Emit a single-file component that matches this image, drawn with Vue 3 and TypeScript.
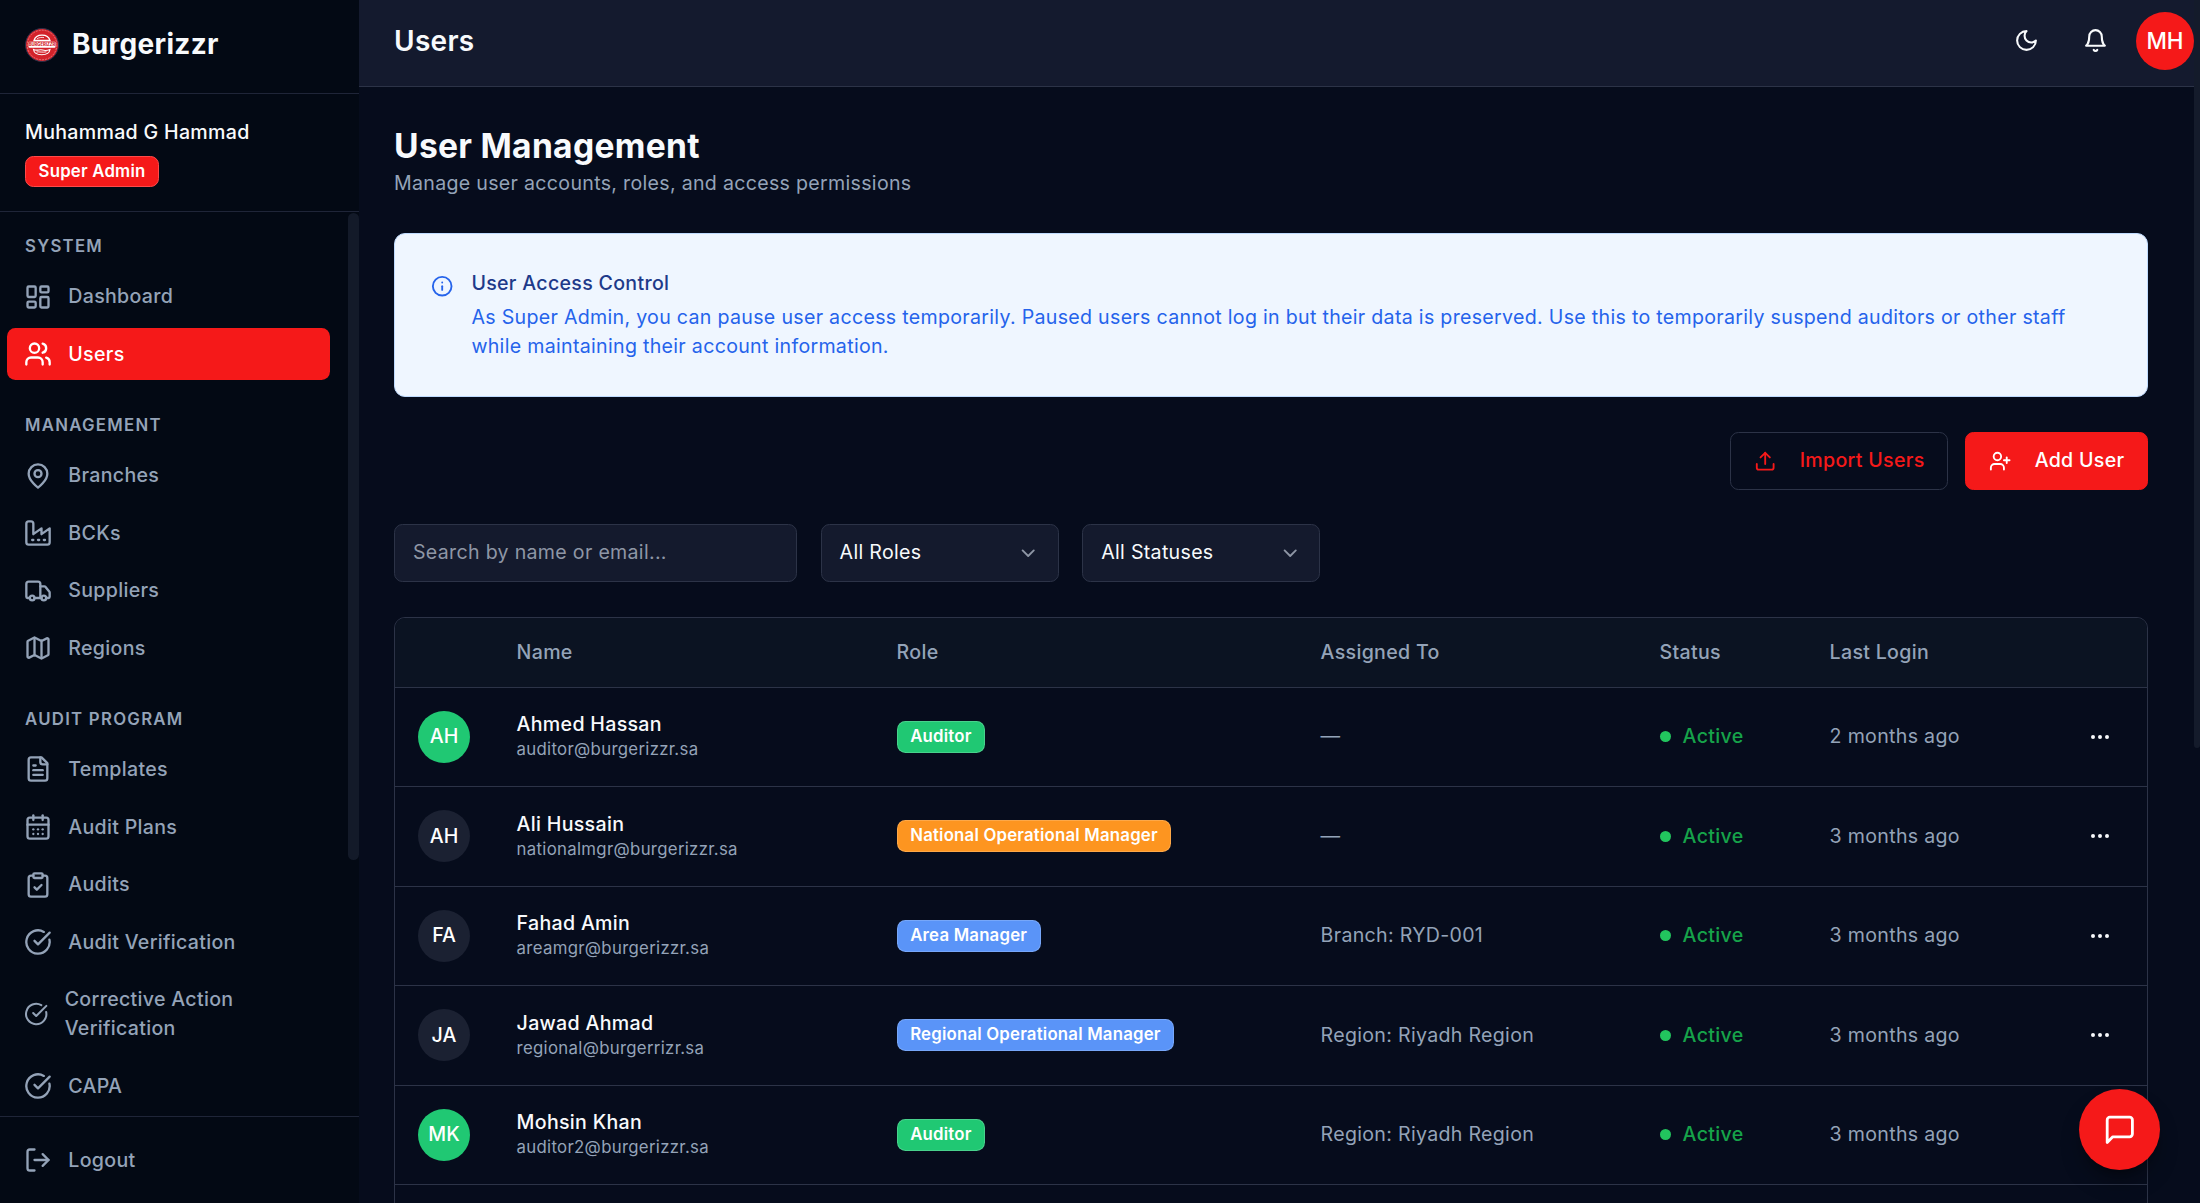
<template>
  <div class="app">
    <aside class="sidebar">
      <div class="brand">
        <svg class="logo" viewBox="0 0 34 34" aria-hidden="true">
          <circle cx="17" cy="17" r="16.500" fill="#d3222a" stroke="#2a2f48" />
          <circle cx="17" cy="17" r="14.800" fill="none" stroke="#f3b8b8" stroke-width="0.5" stroke-dasharray="2 1" />
          <path d="M9 12.500C10 9 13 7.200 17 7.200s7 1.800 8 5.300z" fill="#d3222a" stroke="#fff" stroke-width="1.300" />
          <path d="M12 10.800c2-1.300 4.500-1.600 7-1.200" fill="none" stroke="#fff" stroke-width="0.8" />
          <rect x="3.500" y="13.800" width="27" height="6" rx="1" fill="#fff" />
          <text x="17" y="18.400" text-anchor="middle" class="logo-text">BURGERIZZR</text>
          <path d="M8.500 21.500c3.500 1.800 6-.5 9 .5s5 .5 7.500-.5c-.5 3.500-3.500 5.200-8.300 5.200s-7.700-1.700-8.200-5.200z" fill="#d3222a" stroke="#fff" stroke-width="1.100" />
          <path d="M11.500 24c3-.5 6 .7 10-.2" fill="none" stroke="#fff" stroke-width="0.9" />
        </svg>
        <span class="brand-name">Burgerizzr</span>
      </div>

      <div class="profile">
        <div class="profile-name">Muhammad G Hammad</div>
        <span class="profile-role">Super Admin</span>
      </div>

      <div class="nav">
        <nav class="nav-list">
          <section v-for="group in navGroups" :key="group.title" class="nav-group">
            <h3 class="nav-title">{{ group.title }}</h3>
            <a
              v-for="item in group.items"
              :key="item.label"
              class="nav-item"
              :class="{ active: item.active }"
            >
              <svg class="icon nav-icon" viewBox="0 0 24 24" v-html="icons[item.icon]"></svg>
              <span>{{ item.label }}</span>
            </a>
          </section>
        </nav>
        <div class="nav-scrollbar"><div class="nav-thumb"></div></div>
      </div>

      <div class="logout">
        <a class="nav-item">
          <svg class="icon nav-icon" viewBox="0 0 24 24" v-html="icons.logout"></svg>
          <span>Logout</span>
        </a>
      </div>
    </aside>

    <div class="main">
      <header class="topbar">
        <h1 class="topbar-title">Users</h1>
        <div class="topbar-actions">
          <button class="topbar-btn" aria-label="Theme">
            <svg class="icon" viewBox="0 0 24 24" v-html="icons.moon"></svg>
          </button>
          <button class="topbar-btn" aria-label="Notifications">
            <svg class="icon" viewBox="0 0 24 24" v-html="icons.bell"></svg>
          </button>
          <div class="topbar-avatar">MH</div>
        </div>
      </header>

      <main class="content">
        <h2 class="page-title">User Management</h2>
        <p class="page-subtitle">Manage user accounts, roles, and access permissions</p>

        <div class="alert">
          <svg class="icon alert-icon" viewBox="0 0 24 24" v-html="icons.info"></svg>
          <div>
            <div class="alert-title">User Access Control</div>
            <p class="alert-text">
              As Super Admin, you can pause user access temporarily. Paused users cannot log in but
              their data is preserved. Use this to temporarily suspend auditors or other staff while
              maintaining their account information.
            </p>
          </div>
        </div>

        <div class="actions">
          <button class="btn btn-outline">
            <svg class="icon btn-icon" viewBox="0 0 24 24" v-html="icons.upload"></svg>
            Import Users
          </button>
          <button class="btn btn-primary">
            <svg class="icon btn-icon" viewBox="0 0 24 24" v-html="icons.userPlus"></svg>
            Add User
          </button>
        </div>

        <div class="filters">
          <div class="field search">Search by name or email...</div>
          <div class="field select">
            All Roles
            <svg class="icon chevron" viewBox="0 0 24 24" v-html="icons.chevron"></svg>
          </div>
          <div class="field select">
            All Statuses
            <svg class="icon chevron" viewBox="0 0 24 24" v-html="icons.chevron"></svg>
          </div>
        </div>

        <div class="table">
          <div class="row head">
            <div></div>
            <div>Name</div>
            <div>Role</div>
            <div>Assigned To</div>
            <div>Status</div>
            <div>Last Login</div>
            <div></div>
          </div>
          <div v-for="user in users" :key="user.email" class="row">
            <div class="avatar" :class="{ green: user.role === 'Auditor' }">{{ user.initials }}</div>
            <div>
              <div class="user-name">{{ user.name }}</div>
              <div class="user-email">{{ user.email }}</div>
            </div>
            <div><span class="badge" :class="user.tone">{{ user.role }}</span></div>
            <div class="muted">{{ user.assigned }}</div>
            <div class="status"><i class="dot"></i>Active</div>
            <div class="muted">{{ user.login }}</div>
            <div class="more">
              <svg class="icon" viewBox="0 0 24 24" v-html="icons.more"></svg>
            </div>
          </div>
        </div>
      </main>
    </div>

    <div class="page-scrollbar"><div class="page-thumb"></div></div>

    <button class="fab" aria-label="Chat">
      <svg class="icon" viewBox="0 0 24 24" v-html="icons.message"></svg>
    </button>
  </div>
</template>

<script setup lang="ts">
const icons: Record<string, string> = {
  dashboard:
    '<rect width="7" height="9" x="3" y="3" rx="1"/><rect width="7" height="5" x="14" y="3" rx="1"/><rect width="7" height="9" x="14" y="12" rx="1"/><rect width="7" height="5" x="3" y="16" rx="1"/>',
  users:
    '<path d="M16 21v-2a4 4 0 0 0-4-4H6a4 4 0 0 0-4 4v2"/><circle cx="9" cy="7" r="4"/><path d="M22 21v-2a4 4 0 0 0-3-3.87"/><path d="M16 3.13a4 4 0 0 1 0 7.75"/>',
  pin: '<path d="M20 10c0 6-8 12-8 12s-8-6-8-12a8 8 0 0 1 16 0Z"/><circle cx="12" cy="10" r="3"/>',
  factory:
    '<path d="M2 20a2 2 0 0 0 2 2h16a2 2 0 0 0 2-2V8l-7 5V8l-7 5V4a2 2 0 0 0-2-2H4a2 2 0 0 0-2 2Z"/><path d="M17 18h1"/><path d="M12 18h1"/><path d="M7 18h1"/>',
  truck:
    '<path d="M14 18V6a2 2 0 0 0-2-2H4a2 2 0 0 0-2 2v11a1 1 0 0 0 1 1h2"/><path d="M15 18H9"/><path d="M19 18h2a1 1 0 0 0 1-1v-3.650a1 1 0 0 0-.22-.624l-3.480-4.350A1 1 0 0 0 17.520 8H14"/><circle cx="17" cy="18" r="2"/><circle cx="7" cy="18" r="2"/>',
  map: '<path d="M14.106 5.553a2 2 0 0 0 1.788 0l3.659-1.830A1 1 0 0 1 21 4.619v12.764a1 1 0 0 1-.553.894l-4.553 2.277a2 2 0 0 1-1.788 0l-4.212-2.106a2 2 0 0 0-1.788 0l-3.659 1.830A1 1 0 0 1 3 19.381V6.618a1 1 0 0 1 .553-.894l4.553-2.277a2 2 0 0 1 1.788 0z"/><path d="M15 5.764v15"/><path d="M9 3.236v15"/>',
  file: '<path d="M15 2H6a2 2 0 0 0-2 2v16a2 2 0 0 0 2 2h12a2 2 0 0 0 2-2V7Z"/><path d="M14 2v4a2 2 0 0 0 2 2h4"/><path d="M10 9H8"/><path d="M16 13H8"/><path d="M16 17H8"/>',
  calendar:
    '<path d="M8 2v4"/><path d="M16 2v4"/><rect width="18" height="18" x="3" y="4" rx="2"/><path d="M3 10h18"/><path d="M8 14h.01"/><path d="M12 14h.01"/><path d="M16 14h.01"/><path d="M8 18h.01"/><path d="M12 18h.01"/><path d="M16 18h.01"/>',
  clipboard:
    '<rect width="8" height="4" x="8" y="2" rx="1"/><path d="M16 4h2a2 2 0 0 1 2 2v14a2 2 0 0 1-2 2H6a2 2 0 0 1-2-2V6a2 2 0 0 1 2-2h2"/><path d="m9 14 2 2 4-4"/>',
  check: '<path d="M21.801 10A10 10 0 1 1 17 3.335"/><path d="m9 11 3 3L22 4"/>',
  logout:
    '<path d="M9 21H5a2 2 0 0 1-2-2V5a2 2 0 0 1 2-2h4"/><polyline points="16 17 21 12 16 7"/><line x1="21" y1="12" x2="9" y2="12"/>',
  moon: '<path d="M12 3a6 6 0 0 0 9 9 9 9 0 1 1-9-9Z"/>',
  bell: '<path d="M6 8a6 6 0 0 1 12 0c0 7 3 9 3 9H3s3-2 3-9"/><path d="M10.300 21a1.940 1.940 0 0 0 3.400 0"/>',
  info: '<circle cx="12" cy="12" r="10"/><path d="M12 16v-4"/><path d="M12 8h.01"/>',
  upload:
    '<path d="M21 15v4a2 2 0 0 1-2 2H5a2 2 0 0 1-2-2v-4"/><polyline points="17 8 12 3 7 8"/><line x1="12" y1="3" x2="12" y2="15"/>',
  userPlus:
    '<path d="M16 21v-2a4 4 0 0 0-4-4H6a4 4 0 0 0-4 4v2"/><circle cx="9" cy="7" r="4"/><line x1="19" y1="8" x2="19" y2="14"/><line x1="22" y1="11" x2="16" y2="11"/>',
  chevron: '<path d="m6 9 6 6 6-6"/>',
  more: '<circle cx="12" cy="12" r="1"/><circle cx="19" cy="12" r="1"/><circle cx="5" cy="12" r="1"/>',
  message: '<path d="M21 15a2 2 0 0 1-2 2H7l-4 4V5a2 2 0 0 1 2-2h14a2 2 0 0 1 2 2z"/>',
}

interface NavItem {
  label: string
  icon: string
  active?: boolean
}

const navGroups: { title: string; items: NavItem[] }[] = [
  {
    title: 'SYSTEM',
    items: [
      { label: 'Dashboard', icon: 'dashboard' },
      { label: 'Users', icon: 'users', active: true },
    ],
  },
  {
    title: 'MANAGEMENT',
    items: [
      { label: 'Branches', icon: 'pin' },
      { label: 'BCKs', icon: 'factory' },
      { label: 'Suppliers', icon: 'truck' },
      { label: 'Regions', icon: 'map' },
    ],
  },
  {
    title: 'AUDIT PROGRAM',
    items: [
      { label: 'Templates', icon: 'file' },
      { label: 'Audit Plans', icon: 'calendar' },
      { label: 'Audits', icon: 'clipboard' },
      { label: 'Audit Verification', icon: 'check' },
      { label: 'Corrective Action Verification', icon: 'check' },
      { label: 'CAPA', icon: 'check' },
    ],
  },
]

const users = [
  { initials: 'AH', name: 'Ahmed Hassan', email: 'auditor@burgerizzr.sa', role: 'Auditor', tone: 'green', assigned: '—', login: '2 months ago' },
  { initials: 'AH', name: 'Ali Hussain', email: 'nationalmgr@burgerizzr.sa', role: 'National Operational Manager', tone: 'orange', assigned: '—', login: '3 months ago' },
  { initials: 'FA', name: 'Fahad Amin', email: 'areamgr@burgerizzr.sa', role: 'Area Manager', tone: 'blue', assigned: 'Branch: RYD-001', login: '3 months ago' },
  { initials: 'JA', name: 'Jawad Ahmad', email: 'regional@burgerrizr.sa', role: 'Regional Operational Manager', tone: 'blue', assigned: 'Region: Riyadh Region', login: '3 months ago' },
  { initials: 'MK', name: 'Mohsin Khan', email: 'auditor2@burgerizzr.sa', role: 'Auditor', tone: 'green', assigned: 'Region: Riyadh Region', login: '3 months ago' },
]
</script>

<style>
html,
body {
  margin: 0;
  background: #060c1c;
}
</style>

<style scoped>
.app {
  display: flex;
  height: 100vh;
  overflow: hidden;
  font-family: Inter, 'Liberation Sans', sans-serif;
  font-size: 19.6px;
  line-height: 29px;
  letter-spacing: 0.3px;
  color: #f8fafc;
  background: #060c1c;
}

.icon {
  fill: none;
  stroke: currentColor;
  stroke-width: 2;
  stroke-linecap: round;
  stroke-linejoin: round;
}

/* sidebar */
.sidebar {
  width: 359px;
  flex-shrink: 0;
  display: flex;
  flex-direction: column;
  background: #030914;
}

.brand {
  height: 94.400px;
  box-sizing: border-box;
  padding-left: 25px;
  display: flex;
  align-items: center;
  gap: 13px;
  border-bottom: 1.4px solid #1f2538;
}

.logo {
  width: 34px;
  height: 34px;
  margin-top: -3px;
}

.logo-text {
  font-size: 4.200px;
  font-weight: 800;
  letter-spacing: 0;
  fill: #d3222a;
}

.brand-name {
  font-size: 28px;
  font-weight: 700;
  line-height: 39px;
  margin-top: -5px;
}

.profile {
  height: 118px;
  box-sizing: border-box;
  padding: 24px 25px 0;
  border-bottom: 1.4px solid #1f2538;
}

.profile-name {
  font-weight: 500;
  line-height: 29px;
}

.profile-role {
  display: inline-block;
  margin-top: 9px;
  padding: 0 12.600px;
  height: 31px;
  box-sizing: border-box;
  background: #f51919;
  border: 1.4px solid #ff4a4a;
  border-radius: 8.400px;
  font-size: 16.800px;
  font-weight: 600;
  letter-spacing: 0.2px;
  line-height: 28px;
  color: #fff;
}

.nav {
  flex: 1;
  min-height: 0;
  overflow: hidden;
  display: flex;
}

.nav-list {
  flex: 1;
  min-width: 0;
  padding: 23px 18px 0 7px;
}

.nav-scrollbar {
  width: 11px;
  flex-shrink: 0;
}

.nav-thumb {
  height: 647px;
  margin-top: 1px;
  background: #131a29;
  border-radius: 6px;
}

.nav-group + .nav-group {
  margin-top: 33.600px;
}

.nav-title {
  margin: 0 0 12px 18px;
  font-size: 16.800px;
  font-weight: 600;
  line-height: 23.500px;
  letter-spacing: 1.26px;
  color: #94a3b8;
}

.nav-item {
  display: flex;
  align-items: center;
  gap: 16.500px;
  padding: 11.500px 16.800px;
  border-radius: 8.400px;
  font-weight: 500;
  color: #94a3b8;
}

.nav-item + .nav-item {
  margin-top: 5.600px;
}

.nav-item.active {
  background: #f51919;
  color: #fff;
}

.nav-icon {
  width: 28px;
  height: 28px;
  min-width: 0;
}

.logout {
  height: 87px;
  flex-shrink: 0;
  box-sizing: border-box;
  padding: 17px 29px 0 7px;
  border-top: 1.4px solid #1f2538;
}

/* main */
.main {
  flex: 1;
  min-width: 0;
  height: 100vh;
  overflow: hidden;
}

.page-scrollbar {
  width: 6px;
  flex-shrink: 0;
}

.page-thumb {
  height: 748px;
  background: #141b2b;
  border-radius: 0 0 3px 3px;
}

.topbar {
  height: 87.400px;
  box-sizing: border-box;
  padding: 0 0 5px 35px;
  display: flex;
  align-items: center;
  justify-content: space-between;
  background: #141a2e;
  border-bottom: 1.4px solid #2c3347;
}

.topbar-title {
  margin: 2px 0 0;
  font-size: 28px;
  font-weight: 600;
  line-height: 39px;
}

.topbar-actions {
  display: flex;
  align-items: center;
  gap: 13px;
}

.topbar-btn {
  width: 56px;
  height: 56px;
  padding: 0;
  border: 0;
  background: none;
  color: #f8fafc;
  display: flex;
  align-items: center;
  justify-content: center;
}

.topbar-btn svg {
  width: 25px;
  height: 25px;
}

.topbar-avatar {
  width: 58px;
  height: 58px;
  border-radius: 50%;
  background: #f51919;
  display: flex;
  align-items: center;
  justify-content: center;
  font-size: 22.400px;
  font-weight: 500;
  letter-spacing: 0;
  color: #fff;
}

.content {
  padding: 35px 46px 35px 35px;
}

.page-title {
  margin: 0;
  font-size: 33.600px;
  font-weight: 700;
  line-height: 47px;
}

.page-subtitle {
  margin: 0;
  line-height: 28px;
  color: #94a3b8;
}

.alert {
  margin-top: 36px;
  padding: 34.800px 36px;
  display: flex;
  gap: 18px;
  background: #eff6ff;
  border: 1.4px solid #bfdbfe;
  border-radius: 11px;
  box-sizing: border-box;
}

.alert-icon {
  width: 22.400px;
  height: 22.400px;
  flex-shrink: 0;
  margin-top: 6px;
  color: #2563eb;
}

.alert-title {
  font-weight: 500;
  line-height: 28px;
  color: #1e3a8a;
}

.alert-text {
  margin: 6px 0 0;
  color: #2563eb;
}

.actions {
  margin-top: 35px;
  display: flex;
  justify-content: flex-end;
  gap: 17px;
}

.btn {
  height: 58px;
  padding: 0 22.600px 0 23.200px;
  display: flex;
  align-items: center;
  gap: 23px;
  border-radius: 8.400px;
  font: inherit;
  font-weight: 500;
  letter-spacing: inherit;
  box-sizing: border-box;
}

.btn-icon {
  width: 22.400px;
  height: 22.400px;
}

.btn-outline {
  background: transparent;
  border: 1.4px solid #2c3347;
  color: #f51919;
}

.btn-primary {
  background: #f51919;
  border: 1.4px solid #f51919;
  color: #fff;
}

.filters {
  margin-top: 34px;
  display: flex;
  gap: 23.600px;
}

.field {
  height: 58px;
  box-sizing: border-box;
  padding: 0 18px;
  display: flex;
  align-items: center;
  background: #141a2d;
  border: 1.4px solid #2c3347;
  border-radius: 8.400px;
}

.search {
  width: 403px;
  color: #8e96a5;
}

.select {
  width: 238px;
  justify-content: space-between;
  color: #f8fafc;
}

.chevron {
  width: 22.400px;
  height: 22.400px;
  color: #8e96a5;
}

.table {
  margin-top: 35px;
  min-height: 800px;
  box-sizing: border-box;
  border: 1.4px solid #2c3347;
  border-radius: 11px 11px 0 0;
  overflow: hidden;
}

.row {
  display: grid;
  grid-template-columns: 121.600px 380px 424px 339px 170px 200px 1fr;
  align-items: center;
  height: 99.500px;
  box-sizing: border-box;
  border-bottom: 1.4px solid #2c3347;
}

.row.head {
  height: 69.600px;
  background: #0b1322;
  font-weight: 500;
  color: #94a3b8;
}

.avatar {
  width: 52px;
  height: 52px;
  margin-left: 23px;
  border-radius: 50%;
  background: #1b2132;
  display: flex;
  align-items: center;
  justify-content: center;
  font-weight: 500;
  letter-spacing: 0;
  color: #fff;
}

.avatar.green {
  background: #20c873;
}

.user-name {
  font-weight: 500;
  line-height: 26px;
  color: #f8fafc;
}

.user-email {
  font-size: 16.800px;
  line-height: 25px;
  color: #94a3b8;
}

.badge {
  display: inline-block;
  height: 32px;
  box-sizing: border-box;
  padding: 0 12.600px;
  border: 1.4px solid rgba(255, 255, 255, 0.18);
  border-radius: 8.400px;
  font-size: 16.800px;
  font-weight: 600;
  letter-spacing: 0.2px;
  line-height: 29px;
  color: #fff;
}

.badge.green {
  background: #20c873;
}

.badge.orange {
  background: #fd9520;
}

.badge.blue {
  background: #5a94f8;
}

.muted {
  color: #94a3b8;
}

.status {
  display: flex;
  align-items: center;
  gap: 12px;
  font-weight: 500;
  color: #16a34a;
}

.dot {
  width: 11px;
  height: 11px;
  border-radius: 50%;
  background: #22c55e;
}

.more {
  display: flex;
  justify-content: flex-end;
  padding-right: 34.600px;
  color: #f8fafc;
}

.more svg {
  width: 24px;
  height: 24px;
}

.fab {
  position: fixed;
  right: 40px;
  bottom: 33px;
  width: 81px;
  height: 81px;
  padding: 0;
  border: 0;
  border-radius: 50%;
  background: #f51919;
  color: #fff;
  display: flex;
  align-items: center;
  justify-content: center;
  box-shadow: 0 14px 21px -4px rgba(0, 0, 0, 0.35), 0 6px 8px -4px rgba(0, 0, 0, 0.3);
}

.fab svg {
  width: 33.600px;
  height: 33.600px;
}
</style>
